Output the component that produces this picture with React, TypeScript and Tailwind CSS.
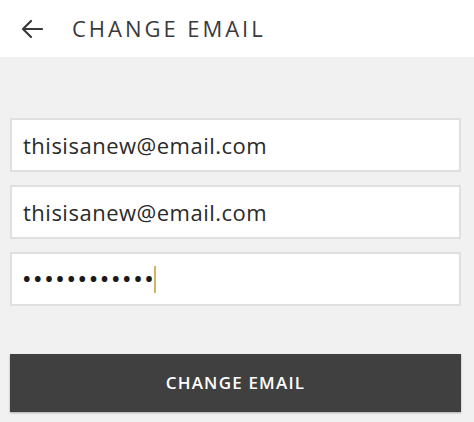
const FIELDS = ['thisisanew@email.com', 'thisisanew@email.com']

function Field({ children }: { children: React.ReactNode }) {
  return (
    <div className="flex h-[54px] items-center border-2 border-[#e0e0e0] bg-white px-[11px]">
      {children}
    </div>
  )
}

function BackArrow() {
  return (
    <svg width="22" height="20" viewBox="0 0 22 20" fill="none" stroke="#3a3a3a" strokeWidth="2.2" strokeLinecap="round" strokeLinejoin="round">
      <path d="M21 10H2M10 2L2 10l8 8" />
    </svg>
  )
}

export default function App() {
  return (
    <div
      className="h-[422px] w-[474px] overflow-hidden bg-[#f1f1f1] text-[#333]"
      style={{ fontFamily: '"Open Sans", "Liberation Sans", sans-serif' }}
    >
      <header className="flex h-[57px] items-center bg-white pl-[21px]">
        <BackArrow />
        <h1 className="ml-[29px] text-[22px] font-medium tracking-[0.135em] text-[#3a3a3a]">
          CHANGE EMAIL
        </h1>
      </header>
      <div className="flex flex-col gap-[13px] px-[10px] pt-[61px] pr-[13px]">
        {FIELDS.map((v, i) => (
          <Field key={i}>
            <span className="text-[22px] tracking-[0.5px] text-[#2a2a2a]">{v}</span>
          </Field>
        ))}
        <Field>
          <span className="-mr-[3px] text-[20px] font-bold tracking-[3.6px] text-[#1a1a1a]">••••••••••••</span>
          <span className="ml-[1px] h-[27px] w-[2px] bg-[#d4b361]" />
        </Field>
      </div>
      <button className="mt-[48px] ml-[10px] flex h-[58px] w-[451px] items-center justify-center bg-[#404040] text-[17px] font-semibold tracking-[0.07em] text-white shadow-[0_1px_2px_rgba(0,0,0,0.3)]">
        CHANGE EMAIL
      </button>
    </div>
  )
}
